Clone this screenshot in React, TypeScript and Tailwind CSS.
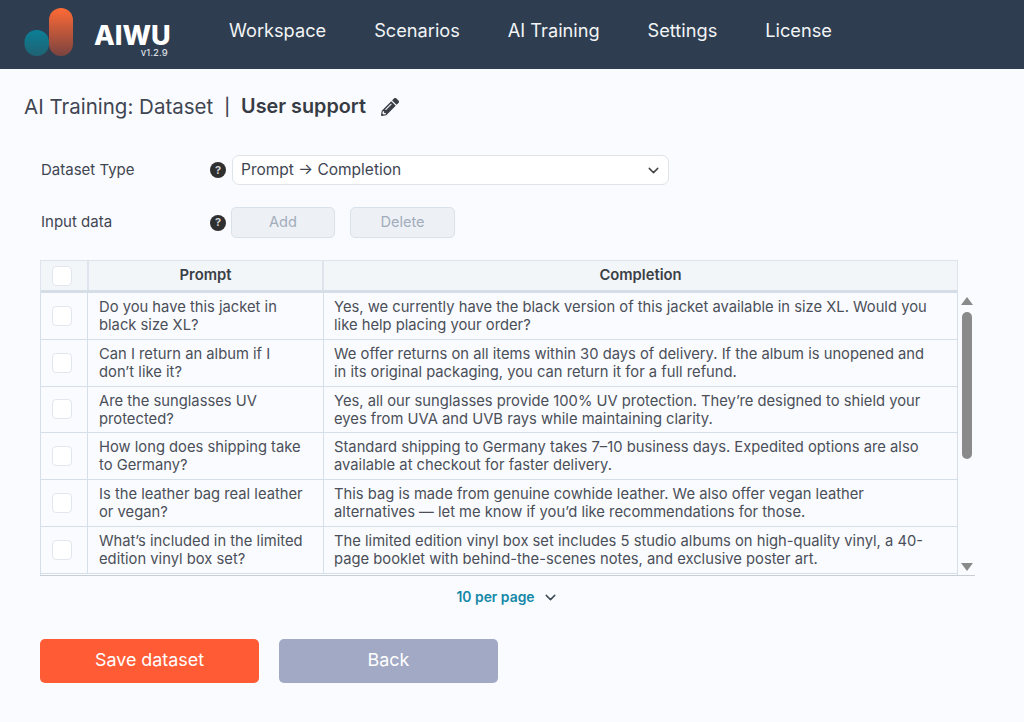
import { ChevronDown } from "lucide-react";

const rows: [string[], string[]][] = [
  [["Do you have this jacket in", "black size XL?"], ["Yes, we currently have the black version of this jacket available in size XL. Would you", "like help placing your order?"]],
  [["Can I return an album if I", "don’t like it?"], ["We offer returns on all items within 30 days of delivery. If the album is unopened and", "in its original packaging, you can return it for a full refund."]],
  [["Are the sunglasses UV", "protected?"], ["Yes, all our sunglasses provide 100% UV protection. They’re designed to shield your", "eyes from UVA and UVB rays while maintaining clarity."]],
  [["How long does shipping take", "to Germany?"], ["Standard shipping to Germany takes 7–10 business days. Expedited options are also", "available at checkout for faster delivery."]],
  [["Is the leather bag real leather", "or vegan?"], ["This bag is made from genuine cowhide leather. We also offer vegan leather", "alternatives — let me know if you’d like recommendations for those."]],
  [["What’s included in the limited", "edition vinyl box set?"], ["The limited edition vinyl box set includes 5 studio albums on high-quality vinyl, a 40-", "page booklet with behind-the-scenes notes, and exclusive poster art."]],
];

function Help() {
  return (
    <span className="flex h-4 w-4 items-center justify-center rounded-full bg-[#2f2f2f] text-[11px] font-bold leading-none text-[#d0d0d0]">?</span>
  );
}

function Box() {
  return <span className="block h-5 w-5 rounded-[4px] border border-[#e2e6ee] bg-white" />;
}

export default function App() {
  return (
    <div className="h-[722px] w-[1024px] overflow-hidden bg-[#fafbff] font-['Inter','Liberation_Sans',sans-serif] text-[#3f4652]">
      <header className="flex h-[69px] items-center bg-[#2e3e50] text-white">
        <div className="ml-[24px] flex w-[205px] items-center">
          <svg width="50" height="48" viewBox="0 0 50 48" className="mt-[-5px]">
            <defs>
              <linearGradient id="o" x1="0" y1="0" x2="0" y2="1">
                <stop offset="0" stopColor="#ff6a35" />
                <stop offset="1" stopColor="#7a4340" />
              </linearGradient>
              <linearGradient id="t" x1="0" y1="0" x2="0" y2="1">
                <stop offset="0" stopColor="#0b7f97" />
                <stop offset="1" stopColor="#1f6272" />
              </linearGradient>
            </defs>
            <rect x="25" y="0" width="24" height="48" rx="12" fill="url(#o)" />
            <rect x="0.5" y="22" width="24.5" height="26" rx="12" fill="url(#t)" />
          </svg>
          <div className="relative ml-[20px] mt-[2px] text-[27px] font-extrabold leading-[20px]">
            AIWU
            <span className="absolute right-[3px] top-[22px] text-[9.5px] font-medium leading-[10px] text-[#d8dde2]">v1.2.9</span>
          </div>
        </div>
        <nav className="flex gap-[48px] pb-[7px] text-[18.2px] text-[#f2f4f6]">
          <span>Workspace</span>
          <span>Scenarios</span>
          <span>AI Training</span>
          <span>Settings</span>
          <span>License</span>
        </nav>
      </header>

      <main className="px-[24px] pt-[26px]">
        <h1 className="flex h-[24px] items-center text-[20.5px] leading-none">
          <span>AI Training: Dataset</span>
          <span className="ml-[11px] mr-[11px] text-[17px] font-medium">|</span>
          <span className="text-[19.8px] font-semibold text-[#373c44]">User support</span>
          <svg viewBox="0 0 512 512" className="ml-[15px] h-[18px] w-[18px] fill-[#3a3f46]">
            <path d="M497.9 142.1l-46.1 46.1c-4.7 4.7-12.3 4.7-17 0l-111-111c-4.7-4.7-4.7-12.3 0-17l46.1-46.1c18.7-18.7 49.1-18.7 67.9 0l60.1 60.1c18.8 18.7 18.8 49.1 0 67.9zM284.2 99.8L21.6 362.4.4 483.9c-2.9 16.4 11.4 30.6 27.8 27.8l121.5-21.3 262.6-262.6c4.7-4.7 4.7-12.3 0-17l-111-111c-4.8-4.7-12.4-4.7-17.1 0zM124.1 339.9c-5.5-5.5-5.5-14.3 0-19.8l154-154c5.5-5.5 14.3-5.5 19.8 0s5.5 14.3 0 19.8l-154 154c-5.5 5.5-14.3 5.5-19.8 0zM88 424h48v36.3l-64.5 11.3-31.1-31.1L51.7 376H88v48z" />
          </svg>
        </h1>

        <div className="ml-[16px] mt-[36px]">
          <div className="flex h-[30px] items-center">
            <span className="w-[170px] pl-[1px] text-[15px]">Dataset Type</span>
            <Help />
            <div className="ml-[6px] flex h-[30px] w-[437px] items-center justify-between rounded-[7px] border border-[#dfe3ea] bg-white pl-[8px] pr-[6px] text-[15.5px]">
              <span>Prompt → Completion</span>
              <ChevronDown size={17} strokeWidth={2} className="text-[#444]" />
            </div>
          </div>

          <div className="mt-[22px] flex h-[31px] items-center">
            <span className="w-[170px] pl-[1px] text-[15px]">Input data</span>
            <Help />
            <button className="ml-[5px] h-[31px] w-[104px] rounded-[5px] border border-[#d9e2ea] bg-[#edf1f6] text-[14.6px] text-[#a2acba]">Add</button>
            <button className="ml-[15px] h-[31px] w-[105px] rounded-[5px] border border-[#d9e2ea] bg-[#edf1f6] text-[14.6px] text-[#a2acba]">Delete</button>
          </div>

          <div className="mt-[22px] w-[935px]">
            <div className="flex h-[33px] w-[918px] border border-b-[3px] border-[#dde4ec] border-b-[#d5dee7] bg-[#f3f6f9] text-[14.8px] font-semibold text-[#3a3f46]">
              <div className="flex w-[48px] shrink-0 items-center justify-center border-r-2 border-[#dde4ec]"><span className="mr-[4px]"><Box /></span></div>
              <div className="flex w-[235px] shrink-0 items-center justify-center border-r-2 border-[#dde4ec]">Prompt</div>
              <div className="flex flex-1 items-center justify-center">Completion</div>
            </div>
            <div className="flex h-[283px] border-b border-[#c9ced4]">
              <div className="w-[918px] border-x border-[#d5dfe9]">
                {rows.map((r, i) => (
                  <div key={i} className="flex h-[46.8px] border-b border-[#d5dfe9] text-[14.75px] leading-[18px] text-[#4a4f58]">
                    <div className="flex w-[47px] shrink-0 items-center justify-center border-r border-[#d5dfe9]"><span className="mr-[4px]"><Box /></span></div>
                    <div className="w-[236px] shrink-0 whitespace-nowrap border-r border-[#d5dfe9] pl-[11px] pt-[5px]">
                      {r[0].map((l) => <div key={l}>{l}</div>)}
                    </div>
                    <div className="flex-1 whitespace-nowrap pl-[10px] pt-[5px]">
                      {r[1].map((l) => <div key={l}>{l}</div>)}
                    </div>
                  </div>
                ))}
              </div>
              <div className="flex w-[17px] flex-col items-center pt-[4px]">
                <span className="h-0 w-0 border-x-[6px] border-b-[8px] border-x-transparent border-b-[#8a8a8a]" />
                <span className="mt-[7px] h-[147px] w-[10px] rounded-[5px] bg-[#8a8a8a]" />
                <span className="mt-[104px] h-0 w-0 border-x-[6px] border-t-[8px] border-x-transparent border-t-[#8a8a8a]" />
              </div>
            </div>
          </div>

          <div className="mt-[11px] flex w-[935px] items-center justify-center text-[13.9px] font-semibold text-[#1488a8]">
            <span>10 per page</span>
            <ChevronDown size={17} strokeWidth={2} className="ml-[7px] text-[#3d4a55]" />
          </div>

          <div className="mt-[31px] flex gap-[20px]">
            <button className="h-[44px] w-[219px] rounded-[5px] bg-[#ff5c35] text-[17.9px] text-white">Save dataset</button>
            <button className="h-[44px] w-[219px] rounded-[5px] bg-[#a2a9c5] text-[17.9px] text-white">Back</button>
          </div>
        </div>
      </main>
    </div>
  );
}
